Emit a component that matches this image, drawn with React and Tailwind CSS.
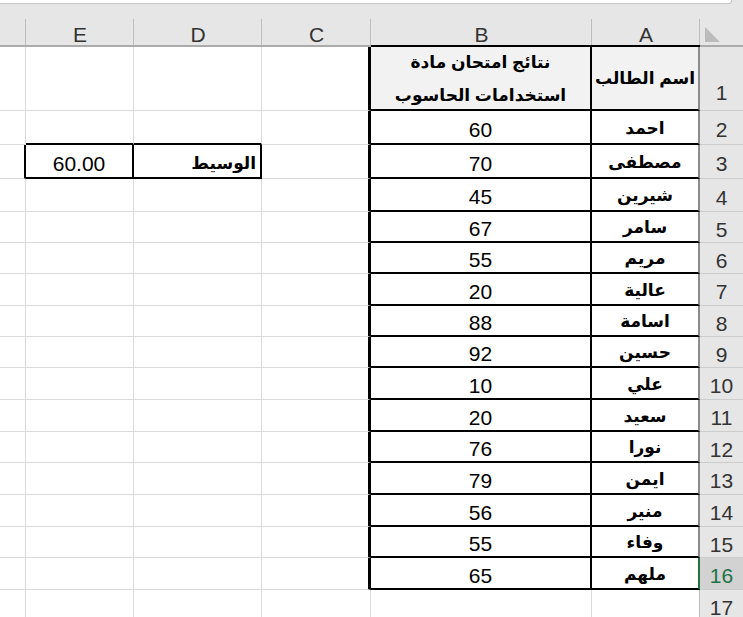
import React from 'react';

const names = ['احمد', 'مصطفى', 'شيرين', 'سامر', 'مريم', 'عالية', 'اسامة', 'حسين', 'علي', 'سعيد', 'نورا', 'ايمن', 'منير', 'وفاء', 'ملهم'];
const scores = [60, 70, 45, 67, 55, 20, 88, 92, 10, 20, 76, 79, 56, 55, 65];

const GRID = 'border-r border-b border-[#dadada]';

function ColHead({ label, dark }) {
  return (
    <div
      className={
        'relative flex items-end justify-center bg-[#e6e6e6] text-[21px] leading-none text-[#333] after:absolute after:right-0 after:top-[15px] after:bottom-0 after:w-px after:bg-[#bdbdbd] ' +
        (dark ? 'border-b-2 border-b-black' : 'border-b-2 border-b-[#ababab]')
      }
    >
      {label}
    </div>
  );
}

function RowHead({ n, selected, first }) {
  return (
    <div
      className={
        'flex justify-center border-b border-b-[#cccccc] text-[21px] leading-none ' +
        (first ? 'items-end pb-[7px] ' : 'items-center pt-[4px] ') +
        (selected ? 'bg-[#d2d2d2] text-[#217346]' : 'bg-[#e6e6e6] text-[#333]')
      }
    >
      {n}
    </div>
  );
}

export default function App() {
  return (
    <div className="w-[743px] h-[617px] overflow-hidden bg-white font-['Liberation_Sans','DejaVu_Sans',sans-serif]">
      {/* formula bar edge */}
      <div className="flex h-[4px] bg-[#e6e6e6]">
        <div className="w-[732px] bg-white border-b border-r border-[#c6c6c6] rounded-br-[3px]"></div>
      </div>

      <div className="grid grid-cols-[26px_108px_128px_109px_221px_108px_43px] grid-rows-[43px_64px_34px_34px_33px_31px_31px_32px_31px_31px_32px_32px_31px_32px_32px_31px_32px_32px]">
        {/* column headers */}
        <ColHead label="" />
        <ColHead label="E" />
        <ColHead label="D" />
        <ColHead label="C" />
        <ColHead label="B" dark />
        <ColHead label="A" dark />
        <div className="flex items-end pl-[5px] pb-[3px] bg-[#e6e6e6] border-b-2 border-b-[#ababab]">
          <svg width="15" height="15" viewBox="0 0 15 15">
            <polygon points="0,0 0,15 15,15" fill="#bcbcbc" />
          </svg>
        </div>

        {/* row 1 */}
        <div className={GRID}></div>
        <div className={GRID}></div>
        <div className={GRID}></div>
        <div className="border-r-[3px] border-r-black border-b border-b-[#dadada]"></div>
        <div className="flex flex-col items-center justify-center pt-[2px] bg-[#f2f2f2] border-r-2 border-r-black border-b-2 border-b-black text-[17px] font-bold leading-[33px] text-black" dir="rtl">
          <span>نتائج امتحان مادة</span>
          <span>استخدامات الحاسوب</span>
        </div>
        <div className="flex items-center justify-center pt-[2px] bg-[#f2f2f2] border-r-2 border-r-[#8c8c8c] border-b-2 border-b-black text-[17px] font-bold text-black" dir="rtl">
          اسم الطالب
        </div>
        <RowHead n={1} first />

        {/* rows 2-16 */}
        {names.map((name, i) => {
          const row = i + 2;
          const last = row === 16;
          return (
            <React.Fragment key={row}>
              <div className={row === 3 ? 'border-r-2 border-r-black border-b border-b-[#dadada]' : GRID}></div>
              {row === 2 && <div className="border-r border-r-[#dadada] border-b-2 border-b-black"></div>}
              {row === 2 && <div className="border-r border-r-[#dadada] border-b-2 border-b-black"></div>}
              {row === 3 && (
                <div className="flex items-center justify-center pt-[4px] border-r-2 border-r-black border-b-2 border-b-black text-[21px] leading-none text-black">
                  60.00
                </div>
              )}
              {row === 3 && (
                <div className="flex items-center justify-start pt-[4px] pr-[4px] border-r-2 border-r-black border-b-2 border-b-black text-[17px] font-bold leading-none text-black" dir="rtl">
                  الوسيط
                </div>
              )}
              {row > 3 && <div className={GRID}></div>}
              {row > 3 && <div className={GRID}></div>}
              <div className="border-r-[3px] border-r-black border-b border-b-[#dadada]"></div>
              <div className="flex items-center justify-center pt-[4px] border-r-2 border-r-black border-b-2 border-b-black text-[21px] leading-none text-black">
                {scores[i]}
              </div>
              <div
                className={
                  'flex items-center justify-center pt-[2px] border-b-2 border-b-black text-[17px] font-bold leading-none text-black ' +
                  (last ? 'border-r-2 border-r-[#217346]' : 'border-r-2 border-r-[#8c8c8c]')
                }
                dir="rtl"
              >
                {name}
              </div>
              <RowHead n={row} selected={last} />
            </React.Fragment>
          );
        })}

        {/* row 17 */}
        <div className={GRID}></div>
        <div className={GRID}></div>
        <div className={GRID}></div>
        <div className={GRID}></div>
        <div className={GRID}></div>
        <div className="border-r border-r-[#bdbdbd] border-b border-b-[#dadada]"></div>
        <RowHead n={17} />
      </div>
    </div>
  );
}
